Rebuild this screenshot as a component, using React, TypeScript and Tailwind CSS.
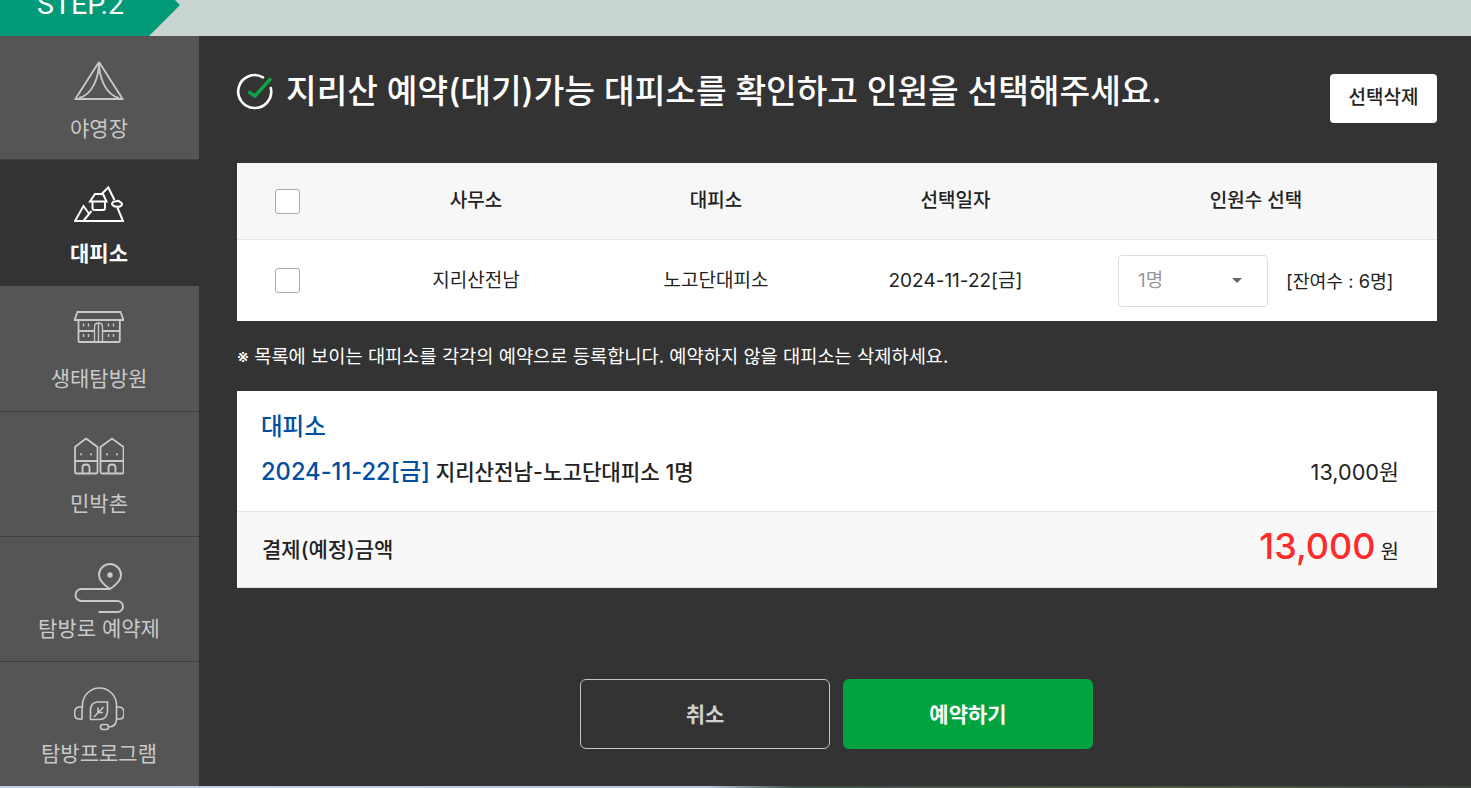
import React from 'react';

const iconClass = 'w-[50px] h-[40px] fill-none stroke-current';

const TentIcon = () => (
  <svg viewBox="74 61 50 40" className={iconClass} strokeWidth={1.8}>
    <path d="M99 62 L76 98 M99 62 L122 98" />
    <path d="M99 62 C99 78 92 95 79 98 M99 62 C99 78 106 95 119 98" />
    <path d="M74.500 99 H123.500" strokeWidth={2.200} />
  </svg>
);

const ShelterIcon = () => (
  <svg viewBox="74 185 50 40" className={iconClass} strokeWidth={2}>
    <path d="M100.500 195 L108.300 187.500 L114.500 200 M117.300 207.300 L123 221 H75 L83.500 206 L88.500 213 M83.300 221 L91.500 211" />
    <path d="M90 201.500 L95 194 H103 L106.500 201.500 Z" />
    <path d="M92.500 202 V208 Q92.500 210 94.500 210 H103 Q105 210 105 208 V202" />
    <path d="M112 204 Q112.500 201 115.500 201.500 Q118 200 120 202 Q123 203.500 121.500 205.500 Q119 207.500 116.500 206.500 Q113.500 207 112 204 Z" />
  </svg>
);

const CenterIcon = () => (
  <svg viewBox="74 310 50 40" className={iconClass} strokeWidth={1.8}>
    <path d="M77.500 312 H120.500 L123.500 320 H74.500 Z" />
    <path d="M78.500 320 V341 Q78.500 342 79.500 342 H118.500 Q119.800 342 119.800 341 V320" />
    <path d="M78.500 331 H94.500 M103 331 H119.800" />
    <path d="M94.500 342 V327 Q94.500 323 98.500 323 Q102.500 323 102.500 327 V342 M98.500 323 V342" strokeWidth={1.300} />
    <path d="M83.500 323.500 V326.500 M88.500 323.500 V326.500 M108.500 323.500 V326.500 M113.500 323.500 V326.500 M83.500 334 V337 M88.500 334 V337 M108.500 334 V337 M113.500 334 V337" strokeWidth={1.400} />
  </svg>
);

const VillageIcon = () => (
  <svg viewBox="74 435 50 40" className={iconClass} strokeWidth={1.8}>
    <path d="M75 446 L86 437.500 L97.500 446 V471 Q97.500 472.500 96 472.500 H76.500 Q75 472.500 75 471 Z M75 460 H97.500" />
    <path d="M100.500 446 L112 437.500 L123.500 446 V471 Q123.500 472.500 122 472.500 H102 Q100.500 472.500 100.500 471 Z M100.500 460 H123.500" />
    <path d="M82.500 472 V466.500 Q82.500 463.500 86 463.500 Q89.500 463.500 89.500 466.500 V472 M108.500 472 V466.500 Q108.500 463.500 112 463.500 Q115.500 463.500 115.500 466.500 V472" />
    <path d="M81 452 V454.500 M91 452 V454.500 M107 452 V454.500 M117 452 V454.500" strokeWidth={1.400} />
  </svg>
);

const RouteIcon = () => (
  <svg viewBox="74 561 50 52" className="w-[50px] h-[52px] fill-none stroke-current" strokeWidth={1.9}>
    <path d="M110 588 C104 584 99 580 99 574 A11 11 0 0 1 121 574 C121 580 116 584 110 588 Z" />
    <circle cx="110" cy="574" r="2.700" fill="currentColor" stroke="none" />
    <path d="M110 588 H81.500 A6 6 0 0 0 81.500 600 H117.500 A5.500 5.500 0 0 1 117.500 611 H98.500" />
  </svg>
);

const ProgramIcon = () => (
  <svg viewBox="74 686 50 45" className="w-[50px] h-[45px] fill-none stroke-current" strokeWidth={1.6}>
    <path d="M82.500 707 V704 A16.500 16.500 0 0 1 116.500 704 V718 Q116.500 726 108 726" />
    <path d="M82 706 H78.500 Q74.500 707 74.500 712 Q74.500 718 78.500 718 H82 Z M117 706 H120 Q124 707 124 712 Q124 718 120 718 H117" />
    <rect x="100.500" y="723.500" width="8" height="5" rx="2.500" />
    <path d="M107.500 701 H97 Q90.500 702 90.500 709 V718.500 H99 Q107 718.500 107.500 710 Z M94 716 L103.500 706 M98 711.500 V706.500 M98 711.500 H103" />
  </svg>
);

const CheckIcon = () => (
  <svg viewBox="236 73 38 37" className="w-[38px] h-[37px] fill-none shrink-0">
    <path d="M263 77.300 A16.500 16.500 0 1 0 270.800 88" stroke="#fff" strokeWidth={2.600} strokeLinecap="round" />
    <path d="M248.300 91.700 L255 96 L271 78.300" stroke="#0aa544" strokeWidth={3.400} />
  </svg>
);

const menu = [
  { label: '야영장', icon: <TentIcon />, h: 'h-[124px]', pt: 'pt-[25px]', gap: 'mt-[14px]' },
  { label: '대피소', icon: <ShelterIcon />, h: 'h-[126px]', pt: 'pt-[25px]', gap: 'mt-[15px]', active: true },
  { label: '생태탐방원', icon: <CenterIcon />, h: 'h-[126px]', pt: 'pt-[24px]', gap: 'mt-[15px]' },
  { label: '민박촌', icon: <VillageIcon />, h: 'h-[125px]', pt: 'pt-[24px]', gap: 'mt-[14px]' },
  { label: '탐방로 예약제', icon: <RouteIcon />, h: 'h-[125px]', pt: 'pt-[25px]', gap: 'mt-[1px]' },
  { label: '탐방프로그램', icon: <ProgramIcon />, h: 'h-[124px]', pt: 'pt-[25px]', gap: 'mt-[8px]' },
];

const Checkbox = () => (
  <span className="block w-[25px] h-[25px] bg-white border border-[#aaaaaa] rounded-[3px]" />
);

const rowClass = 'grid grid-cols-[119px_240px_240px_239px_1fr] items-center text-center';

export default function App() {
  return (
    <div className="w-[1471px] h-[788px] overflow-hidden bg-[#c8d4d1] font-['Inter','Noto_Sans_CJK_KR',sans-serif]">
      {/* Step tab, cut off by the scroll position */}
      <div className="h-[36px] overflow-hidden">
        <div className="w-[181px] h-[62px] -mt-[26px] bg-[#009a78] [clip-path:polygon(0_0,149px_0,180px_31px,149px_62px,0_62px)] text-white text-[28.500px] leading-[62px] pl-[37px] font-['Roboto',sans-serif]">
          STEP.2
        </div>
      </div>

      <div className="flex h-[750px]">
        {/* Side menu */}
        <nav className="w-[199px] shrink-0 flex flex-col">
          {menu.map((item) => (
            <div
              key={item.label}
              className={`${item.h} ${item.pt} pr-[1px] flex flex-col items-center ${
                item.active
                  ? 'bg-[#333333] text-white font-bold'
                  : 'bg-[#555555] text-[#c9c9c9] border-b border-[#3f3f3f] last:border-b-0'
              }`}
            >
              {item.icon}
              <span className={`${item.gap} text-[21px] leading-[28px] whitespace-nowrap`}>{item.label}</span>
            </div>
          ))}
        </nav>

        {/* Content */}
        <main className="flex-1 bg-[#333333] pl-[38px] pr-[34px]">
          <div className="flex items-start justify-between h-[127px] pt-[37px]">
            <h1 className="flex items-center gap-[12px] -ml-[1px] text-white text-[33.300px] leading-[37px] font-medium whitespace-nowrap">
              <CheckIcon />
              지리산 예약(대기)가능 대피소를 확인하고 인원을 선택해주세요.
            </h1>
            <button className="w-[107px] h-[49px] mt-[1px] bg-white rounded-[4px] text-[#222222] text-[19px] font-medium">
              선택삭제
            </button>
          </div>

          <div className="bg-white text-[#222222]">
            <div className={`${rowClass} h-[77px] bg-[#f7f7f7] border-b border-[#e6e6e6] text-[19px] font-medium`}>
              <div className="pl-[38px]"><Checkbox /></div>
              <div>사무소</div>
              <div>대피소</div>
              <div>선택일자</div>
              <div>인원수 선택</div>
            </div>
            <div className={`${rowClass} h-[81px] text-[19px]`}>
              <div className="pl-[38px]"><Checkbox /></div>
              <div className="pt-[2px]">지리산전남</div>
              <div className="pt-[2px]">노고단대피소</div>
              <div className="pt-[2px]">2024-11-22[금]</div>
              <div className="flex items-center pl-[43px]">
                <div className="w-[150px] h-[52px] border border-[#dddddd] rounded-[4px] flex items-center justify-between pl-[19px] pr-[25px] text-[#999999] text-[19px]">
                  <span className="pt-[2px]">1명</span>
                  <span className="w-0 h-0 border-x-[5px] border-x-transparent border-t-[5px] border-t-[#666666]" />
                </div>
                <span className="ml-[18px] pt-[2px] text-[18.300px] whitespace-nowrap">[잔여수 : 6명]</span>
              </div>
            </div>
          </div>

          <p className="h-[70px] pt-[2px] flex items-center text-white text-[18.700px] whitespace-nowrap">
            ※ 목록에 보이는 대피소를 각각의 예약으로 등록합니다. 예약하지 않을 대피소는 삭제하세요.
          </p>

          <div className="bg-white text-[#222222]">
            <div className="h-[121px] border-b border-[#e6e6e6] pl-[24px] pr-[38px] pt-[20px]">
              <div className="text-[#004ea2] text-[23.500px] leading-[32px] font-medium">대피소</div>
              <div className="flex items-center justify-between mt-[13px] leading-[32px]">
                <div className="text-[21.200px] font-medium">
                  <span className="text-[#004ea2] text-[23.700px]">2024-11-22[금]</span> 지리산전남-노고단대피소 1명
                </div>
                <div className="text-[21.700px]">13,000원</div>
              </div>
            </div>
            <div className="h-[76px] bg-[#f8f8f8] border-b border-[#dddddd] flex items-center justify-between pl-[25px] pr-[38px]">
              <span className="text-[21px] font-medium">결제(예정)금액</span>
              <span className="flex items-baseline gap-[5px] pb-[8px] text-[20px]">
                <span className="text-[#ff2a2a] text-[36px] leading-[44px] font-medium">13,000</span>원
              </span>
            </div>
          </div>

          <div className="flex justify-center gap-[13px] mt-[91px] pr-[1px]">
            <button className="w-[250px] h-[70px] pt-[2px] border border-[#c4c4c4] rounded-[6px] text-[#d0d0d0] text-[21px] font-bold">
              취소
            </button>
            <button className="w-[250px] h-[70px] pt-[2px] bg-[#00a33f] rounded-[6px] text-white text-[21px] font-bold">
              예약하기
            </button>
          </div>
        </main>
      </div>

      {/* Sliver of the page's background photo below the panel */}
      <div className="h-[2px] bg-[linear-gradient(90deg,#c3cfe6_0%,#b9c8e2_48%,#3f5048_54%,#4a5a3c_80%,#39483f_100%)]" />
    </div>
  );
}
